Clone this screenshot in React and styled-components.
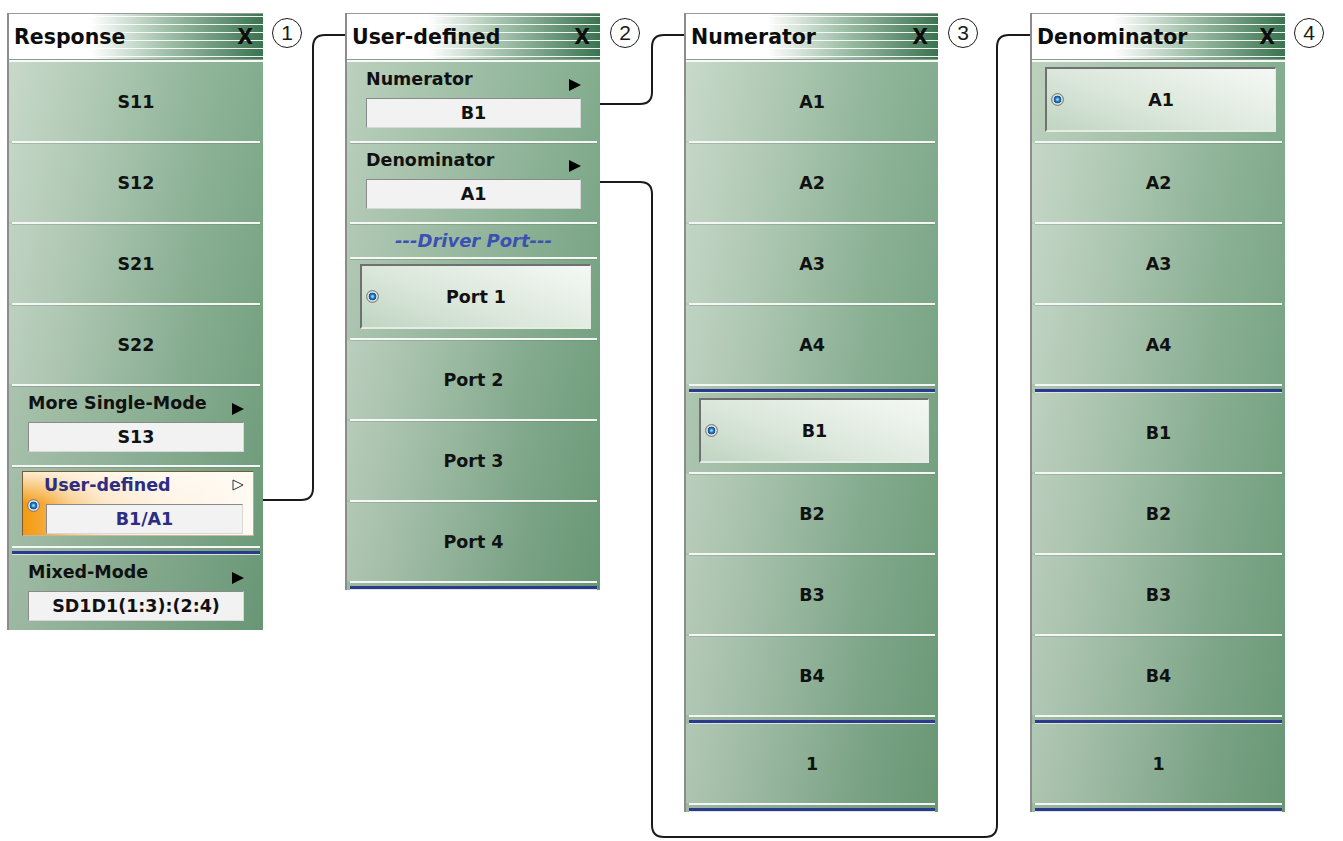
import React from "react";
import styled, { createGlobalStyle } from "styled-components";

const GlobalStyle = createGlobalStyle`
  html, body {
    margin: 0;
    padding: 0;
    background: #fff;
  }
  body {
    font-family: "DejaVu Sans", "Noto Sans", sans-serif;
  }
`;

const Page = styled.div`
  position: relative;
  width: 1343px;
  height: 841px;
  box-sizing: border-box;
  padding: 13px 0 0 7px;
  display: flex;
  align-items: flex-start;
  overflow: hidden;
`;

const Panel = styled.div`
  width: ${(p) => p.$w}px;
  margin-left: ${(p) => p.$ml || 0}px;
  box-sizing: border-box;
  border-left: 2px solid #8c8c8c;
  display: flex;
  flex-direction: column;
  background:
    linear-gradient(to bottom, rgba(255, 255, 255, 0.1), rgba(20, 70, 40, 0.16)),
    linear-gradient(to right, #b7ceb9, #78a684);
`;

const Header = styled.div`
  height: 47px;
  box-sizing: border-box;
  border-top: 1px solid #9a9a9a;
  border-bottom: 1px solid #8d9d92;
  padding: 0 10px 0 5px;
  display: flex;
  align-items: center;
  justify-content: space-between;
  font-size: 20.5px;
  font-weight: bold;
  color: #0d0d0d;
  background:
    repeating-linear-gradient(
      to bottom,
      transparent 0 2px,
      rgba(255, 255, 255, 0.9) 2px 3px,
      transparent 3px 8px
    ),
    linear-gradient(to right, #fff 0%, #fff 32%, #a6c4ae 60%, #3b7350 100%);
`;

const HeaderRule = styled.div`
  height: 2px;
  background: #f7f9f7;
`;

const Button = styled.div`
  height: 79px;
  display: flex;
  align-items: center;
  justify-content: center;
  font-size: 17.5px;
  font-weight: bold;
  color: #111;
  background: linear-gradient(100deg, rgba(255, 255, 255, 0.18), rgba(255, 255, 255, 0) 70%);
`;

const Rule = styled.div`
  height: 2px;
  margin: 0 3px;
  background: #f5f7f5;
  box-shadow: 0 1px 0 rgba(110, 135, 118, 0.45);
`;

const DoubleRule = styled.div`
  height: 9px;
  margin: 0 3px;
  background: linear-gradient(
    to bottom,
    #f4f6f4 0 2px,
    transparent 2px 5px,
    #2b3a8c 5px 8px,
    #dde6de 8px 9px
  );
`;

const Slot = styled.div`
  height: 79px;
  box-sizing: border-box;
  padding: 5px 9px 9px 13px;
  display: flex;
`;

const SelectedBox = styled.div`
  flex: 1;
  display: grid;
  grid-template-columns: 24px 1fr 24px;
  align-items: center;
  border-top: 2px solid #707070;
  border-left: 2px solid #707070;
  border-right: 1px solid #e4ece4;
  border-bottom: 2px solid #e4ece4;
  background: linear-gradient(20deg, #c0d5c2 0%, #dce8dc 45%, #f5f8f5 100%);
  font-size: 17.5px;
  font-weight: bold;
  color: #111;
  text-align: center;
`;

const Radio = styled.span`
  display: block;
  flex: none;
  width: 13px;
  height: 13px;
  margin-left: ${(p) => p.$ml || 0}px;
  margin-top: ${(p) => p.$mt || 0}px;
  border-radius: 50%;
  box-sizing: border-box;
  border: 1px solid #7e7e7e;
  background: radial-gradient(
    circle at 50% 50%,
    #8fd2f7 0 0.8px,
    #2a86cc 1.8px,
    #0f4f8c 3.6px,
    #ececec 4.2px,
    #bdbdbd 5.5px
  );
`;

const FieldGroup = styled.div`
  box-sizing: border-box;
  padding: 7px 19px ${(p) => (p.$last ? 9 : 13)}px 19px;
  display: flex;
  flex-direction: column;
`;

const LabelRow = styled.div`
  height: ${(p) => p.$h || 20}px;
  line-height: ${(p) => p.$h || 20}px;
  display: flex;
  align-items: flex-start;
  justify-content: space-between;
  font-size: 17.5px;
  font-weight: bold;
  color: ${(p) => p.$color || "#111"};
`;

const ArrowIcon = styled.svg`
  flex: none;
  margin-top: ${(p) => p.$mt || 10}px;
`;

const Field = styled.div`
  height: 30px;
  margin-top: ${(p) => p.$mt ?? 9}px;
  margin-left: ${(p) => p.$ml || 0}px;
  margin-right: ${(p) => p.$mr || 0}px;
  box-sizing: border-box;
  border-top: 1px solid #8a8a8a;
  border-left: 1px solid #8a8a8a;
  border-right: 1px solid #d8d8d8;
  border-bottom: 1px solid #d8d8d8;
  background: #f2f2f2;
  display: flex;
  align-items: center;
  justify-content: center;
  font-size: 17.5px;
  font-weight: bold;
  color: ${(p) => p.$color || "#111"};
`;

const OrangeSlot = styled.div`
  height: 79px;
  box-sizing: border-box;
  padding: 4px 9px 10px 13px;
  display: flex;
`;

const OrangeBox = styled.div`
  flex: 1;
  box-sizing: border-box;
  padding: 2px 9px 1px 4px;
  display: flex;
  border-top: 1px solid #7a5a32;
  border-left: 1px solid #7a5a32;
  border-right: 1px solid #b8a890;
  border-bottom: 1px solid #c9b89c;
  background:
    linear-gradient(to bottom, rgba(255, 250, 242, 0.85) 0%, rgba(255, 250, 242, 0) 50%),
    linear-gradient(
      to right,
      #f29a10 0%,
      #f5a935 9%,
      #f9cd8a 20%,
      #fde7c8 35%,
      #fff3e4 60%,
      #fffaf4 100%
    );
`;

const OrangeContent = styled.div`
  flex: 1;
  margin-left: 4px;
  display: flex;
  flex-direction: column;
`;

const Caption = styled.div`
  height: 33px;
  display: flex;
  align-items: center;
  justify-content: center;
  font-style: italic;
  font-weight: bold;
  font-size: 18px;
  color: #3c50b4;
`;

const Callout = styled.div`
  flex: none;
  width: 30px;
  height: 30px;
  margin-left: ${(p) => p.$ml}px;
  margin-top: 5px;
  box-sizing: border-box;
  border: 1.5px solid #1a1a1a;
  border-radius: 50%;
  display: flex;
  align-items: center;
  justify-content: center;
  font-family: "Liberation Sans", Arial, sans-serif;
  font-size: 21px;
  color: #1a1a1a;
`;

const Connectors = styled.svg`
  position: absolute;
  left: 0;
  top: 0;
  pointer-events: none;
`;

const Arrow = ({ hollow }) => (
  <ArrowIcon width="12" height="12" viewBox="0 0 12 12" $mt={hollow ? 5 : 10}>
    <polygon
      points={hollow ? "1,1 11,6 1,11" : "0,0 12,6 0,12"}
      fill={hollow ? "#fff" : "#000"}
      stroke={hollow ? "#333" : "none"}
      strokeWidth="1"
    />
  </ArrowIcon>
);

const PanelHeader = ({ title }) => (
  <>
    <Header>
      <span>{title}</span>
      <span>X</span>
    </Header>
    <HeaderRule />
  </>
);

const Selected = ({ children }) => (
  <Slot>
    <SelectedBox>
      <Radio $ml={4} />
      <span>{children}</span>
      <span />
    </SelectedBox>
  </Slot>
);

const Group = ({ label, value, last }) => (
  <FieldGroup $last={last}>
    <LabelRow>
      <span>{label}</span>
      <Arrow />
    </LabelRow>
    <Field>{value}</Field>
  </FieldGroup>
);

const ListPanel = ({ title, w, ml, selected }) => {
  const item = (name) =>
    name === selected ? <Selected key={name}>{name}</Selected> : <Button key={name}>{name}</Button>;
  return (
    <Panel $w={w} $ml={ml}>
      <PanelHeader title={title} />
      {item("A1")}
      <Rule />
      {item("A2")}
      <Rule />
      {item("A3")}
      <Rule />
      {item("A4")}
      <DoubleRule />
      {item("B1")}
      <Rule />
      {item("B2")}
      <Rule />
      {item("B3")}
      <Rule />
      {item("B4")}
      <DoubleRule />
      <Button>1</Button>
      <DoubleRule />
    </Panel>
  );
};

export default function App() {
  return (
    <Page>
      <GlobalStyle />

      <Panel $w={256}>
        <PanelHeader title="Response" />
        <Button>S11</Button>
        <Rule />
        <Button>S12</Button>
        <Rule />
        <Button>S21</Button>
        <Rule />
        <Button>S22</Button>
        <Rule />
        <Group label="More Single-Mode" value="S13" />
        <Rule />
        <OrangeSlot>
          <OrangeBox>
            <Radio $mt={25} />
            <OrangeContent>
              <LabelRow $h={22} $color="#2d2d82">
                <span>User-defined</span>
                <Arrow hollow />
              </LabelRow>
              <Field $mt={8} $ml={2} $mr={1} $color="#2d2d82">
                B1/A1
              </Field>
            </OrangeContent>
          </OrangeBox>
        </OrangeSlot>
        <DoubleRule />
        <Group label="Mixed-Mode" value="SD1D1(1:3):(2:4)" last />
      </Panel>
      <Callout $ml={9}>1</Callout>

      <Panel $w={255} $ml={43}>
        <PanelHeader title="User-defined" />
        <Group label="Numerator" value="B1" />
        <Rule />
        <Group label="Denominator" value="A1" />
        <Rule />
        <Caption>---Driver Port---</Caption>
        <Rule />
        <Selected>Port 1</Selected>
        <Rule />
        <Button>Port 2</Button>
        <Rule />
        <Button>Port 3</Button>
        <Rule />
        <Button>Port 4</Button>
        <DoubleRule />
      </Panel>
      <Callout $ml={10}>2</Callout>

      <ListPanel title="Numerator" w={254} ml={44} selected="B1" />
      <Callout $ml={10}>3</Callout>

      <ListPanel title="Denominator" w={255} ml={52} selected="A1" />
      <Callout $ml={9}>4</Callout>

      <Connectors width="1343" height="841" viewBox="0 0 1343 841">
        <g fill="none" stroke="#1a1a1a" strokeWidth="2">
          <path d="M263 500 H301 Q313 500 313 488 V47 Q313 35 325 35 H345" />
          <path d="M600 104 H640 Q652 104 652 92 V47 Q652 35 664 35 H684" />
          <path d="M600 182 H640 Q652 182 652 194 V825 Q652 837 664 837 H985 Q997 837 997 825 V47 Q997 35 1009 35 H1030" />
        </g>
      </Connectors>
    </Page>
  );
}
